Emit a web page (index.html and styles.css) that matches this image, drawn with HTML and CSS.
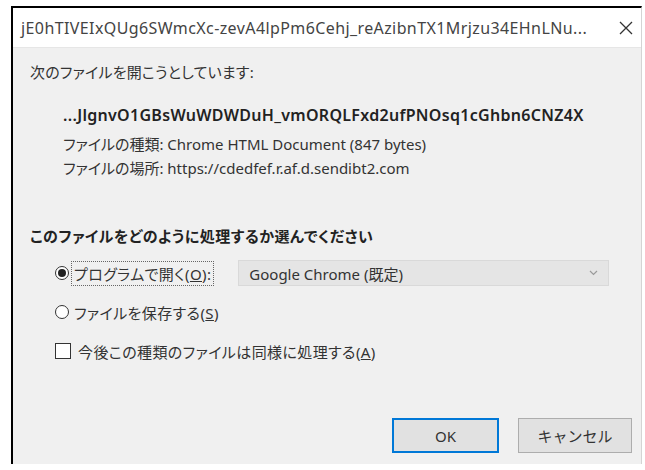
FILE: index.html
```html
<!DOCTYPE html>
<html lang="ja">
<head>
<meta charset="utf-8">
<title>ファイルを開く</title>
<link rel="stylesheet" href="styles.css">
</head>
<body>
<div class="dialog">
  <div class="titlebar">
    <span class="title">jE0hTIVEIxQUg6SWmcXc-zevA4lpPm6Cehj_reAzibnTX1Mrjzu34EHnLNu...</span>
    <span class="close">
      <svg width="14" height="14" viewBox="0 0 14 14"><path d="M1 1L13 13M13 1L1 13" stroke="#333" stroke-width="1.3" fill="none"/></svg>
    </span>
  </div>
  <div class="content">
    <p class="intro">次のファイルを開こうとしています:</p>
    <div class="fileinfo">
      <p class="filename">...JlgnvO1GBsWuWDWDuH_vmORQLFxd2ufPNOsq1cGhbn6CNZ4X</p>
      <p class="meta">ファイルの種類: Chrome HTML Document (847 bytes)</p>
      <p class="meta">ファイルの場所: https://cdedfef.r.af.d.sendibt2.com</p>
    </div>
    <p class="question">このファイルをどのように処理するか選んでください</p>
    <div class="options">
      <div class="row">
        <span class="radio checked"></span>
        <span class="label focused">プログラムで開く(<u>O</u>):</span>
        <div class="select">
          <span>Google Chrome (既定)</span>
          <svg width="9" height="6" viewBox="0 0 9 6"><path d="M1 1L4.5 4.5L8 1" stroke="#9a9a9a" stroke-width="1.2" fill="none"/></svg>
        </div>
      </div>
      <div class="row">
        <span class="radio"></span>
        <span class="label">ファイルを保存する(<u>S</u>)</span>
      </div>
      <div class="row">
        <span class="checkbox"></span>
        <span class="label">今後この種類のファイルは同様に処理する(<u>A</u>)</span>
      </div>
    </div>
    <div class="buttons">
      <button class="btn default">OK</button>
      <button class="btn">キャンセル</button>
    </div>
  </div>
</div>
</body>
</html>
```

FILE: styles.css
```css
html, body {
  margin: 0;
  background: #ffffff;
}

body {
  font-family: "Noto Sans", "Noto Sans CJK JP", sans-serif;
  font-size: 15px;
  color: #333;
  font-feature-settings: "palt";
}

.dialog {
  margin: 6px 0 0 11px;
  width: 628px;
  height: 456px;
  border-top: 2px solid #000;
  border-left: 2px solid #000;
  border-right: 1px solid #d4d4d4;
  background: #f0f0f0;
  display: flex;
  flex-direction: column;
}

.titlebar {
  height: 39px;
  background: #fff;
  display: flex;
  align-items: center;
  justify-content: space-between;
  padding: 0 0 0 8px;
  border-bottom: 1px solid #e6e6e6;
}

.title {
  color: #444;
  font-size: 16px;
  letter-spacing: 0.4px;
  white-space: nowrap;
}

.close {
  display: flex;
  width: 30px;
  justify-content: center;
}

.content {
  flex: 1;
  padding: 12px 0 0 17px;
  display: flex;
  flex-direction: column;
}

p {
  margin: 0;
}

.intro {
  line-height: 24px;
  letter-spacing: 0.2px;
}

.fileinfo {
  padding: 18px 0 0 33px;
}

.filename {
  font-weight: 600;
  color: #222;
  font-size: 16px;
  line-height: 26px;
  letter-spacing: 0.3px;
}

.meta {
  line-height: 24px;
  margin-top: 4px;
}

.meta + .meta {
  margin-top: 0;
}

.question {
  font-weight: 700;
  color: #222;
  margin-top: 44px;
  line-height: 24px;
  letter-spacing: 0.5px;
}

.options {
  padding: 10px 0 0 25px;
  display: flex;
  flex-direction: column;
}

.row {
  display: flex;
  align-items: center;
  height: 30px;
}

.row + .row {
  margin-top: 9px;
}

.radio {
  width: 12px;
  height: 12px;
  border: 1px solid #333;
  border-radius: 50%;
  background: #fff;
  margin-right: 2px;
  display: flex;
  align-items: center;
  justify-content: center;
}

.radio.checked::after {
  content: "";
  width: 8px;
  height: 8px;
  border-radius: 50%;
  background: #222;
}

.label {
  padding: 1px 2px;
  border: 1px dotted transparent;
  letter-spacing: 0.4px;
}

.label.focused {
  border-color: #666;
}

.select {
  margin-left: 24px;
  width: 371px;
  height: 26px;
  background: #e5e5e5;
  border: 1px solid #d9d9d9;
  display: flex;
  align-items: center;
  justify-content: space-between;
  padding: 0 10px 0 10px;
  box-sizing: border-box;
  color: #333;
}

.checkbox {
  width: 14px;
  height: 14px;
  border: 1px solid #333;
  background: #fff;
  margin-right: 4px;
}

.buttons {
  margin-top: auto;
  display: flex;
  justify-content: flex-end;
  gap: 19px;
  padding: 0 9px 11px 0;
}

.btn {
  font-family: inherit;
  font-size: 15px;
  color: #333;
  background: #e1e1e1;
  border: 1px solid #adadad;
  width: 114px;
  height: 35px;
  padding: 0;
}

.btn.default {
  border: 2px solid #0078d7;
  width: 107px;
}
```
